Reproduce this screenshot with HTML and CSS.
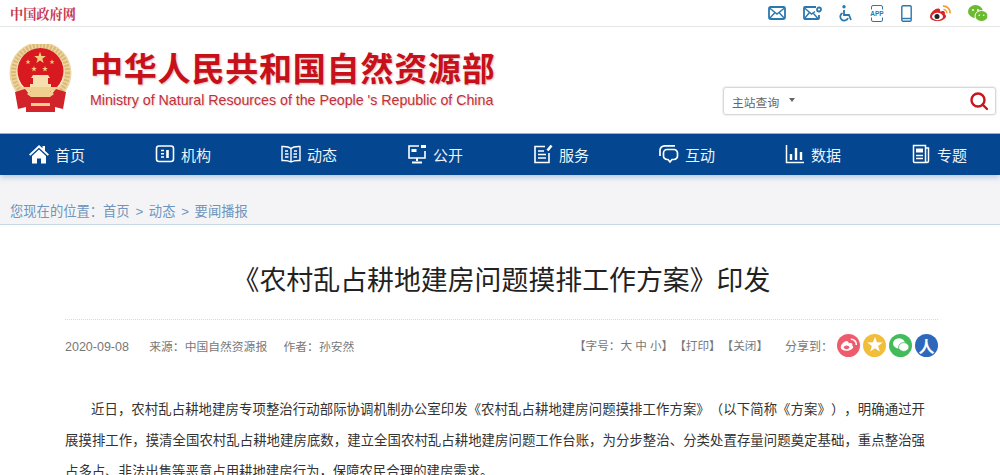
FILE: index.html
```html
<!DOCTYPE html>
<html lang="zh-CN">
<head>
  <meta charset="UTF-8" />
  <meta name="viewport" content="width=device-width, initial-scale=1" />
  <title>《农村乱占耕地建房问题摸排工作方案》印发</title>
  <link rel="stylesheet" href="styles.css">
</head>

<body>
  <svg class="defs" width="0" height="0">
    <defs>
      <polygon id="star" points="0,-10 2.35,-3.24 9.51,-3.09 3.8,1.24 5.88,8.09 0,4 -5.88,8.09 -3.8,1.24 -9.51,-3.09 -2.35,-3.24" />
    </defs>
  </svg>

  <!-- Barre du haut -->
  <div class="topbar">
    <a class="gov-link">中国政府网</a>
    <div class="top-icons">
      <svg width="18" height="14" viewBox="0 0 18 14" fill="none" stroke="#2b78ae" stroke-width="1.8">
        <rect x="1" y="1" width="16" height="12" rx="1.5" />
        <path d="M1.5 2 9 8l7.5-6M1.5 12.5 7 6.5M16.500 12.500 11 6.500" stroke-width="1.400" />
      </svg>
      <svg width="19" height="14" viewBox="0 0 19 14" fill="none" stroke="#2b78ae" stroke-width="1.8">
        <path d="M13 1H2a1 1 0 0 0-1 1v10a1 1 0 0 0 1 1h13a1 1 0 0 0 1-1V9" />
        <path d="M1.500 2 8.500 8 12 5.500M1.500 12.500 6.500 6.500M15 12.500 10.500 7.500" stroke-width="1.400" />
        <circle cx="16" cy="3.500" r="2" />
      </svg>
      <svg width="14" height="17" viewBox="0 0 14 17" fill="none" stroke="#2b78ae" stroke-width="1.800">
        <circle cx="5" cy="1.800" r="1.700" fill="#2b78ae" stroke="none" />
        <path d="M5 5v5h5l2 5" />
        <path d="M3.500 8a4 4 0 1 0 5.500 5" />
      </svg>
      <svg width="14" height="17" viewBox="0 0 14 17">
        <rect x="1.500" y="0.500" width="11" height="16" rx="1.500" fill="none" stroke="#2b78ae" />
        <rect x="0" y="4.500" width="14" height="8" fill="#fff" />
        <text x="7" y="11" class="app-text">APP</text>
      </svg>
      <svg width="11" height="17" viewBox="0 0 11 17" fill="none" stroke="#2b78ae" stroke-width="1.400">
        <rect x="0.800" y="0.800" width="9.400" height="15.400" rx="1.200" />
        <path d="M1 13.500h9" />
      </svg>
      <svg width="22" height="17" viewBox="0 0 22 17">
        <path d="M1 11.500C1 8 6 3 9.500 3.500c2 .3 1.800 2.300 1.500 3 2.500-1 5-.7 5 1.500 0 .7-.3 1.200-.3 1.200 1.200.6 1.300 1.500 1.300 2 0 2.500-4 4.800-8.500 4.800C4 16 1 14.500 1 11.500z" fill="#d7252c" />
        <ellipse cx="8.500" cy="11.500" rx="5.500" ry="3.700" fill="#fff" />
        <circle cx="8" cy="11.500" r="2.500" fill="#222" />
        <path d="M14 1.200a6.500 6.500 0 0 1 7 7.300" fill="none" stroke="#f0a030" stroke-width="1.700" />
        <path d="M14.500 4.500a3.300 3.300 0 0 1 3.300 3.700" fill="none" stroke="#f0a030" stroke-width="1.400" />
      </svg>
      <svg width="20" height="17" viewBox="0 0 20 17">
        <ellipse cx="7.500" cy="6.500" rx="7.500" ry="6.500" fill="#6cba2f" />
        <ellipse cx="13.500" cy="11" rx="6.500" ry="5.500" fill="#6cba2f" stroke="#fff" stroke-width="1" />
        <circle cx="5" cy="5" r="1" fill="#fff" />
        <circle cx="10" cy="5" r="1" fill="#fff" />
        <circle cx="11.300" cy="10.300" r=".8" fill="#fff" />
        <circle cx="15.700" cy="10.300" r=".8" fill="#fff" />
      </svg>
    </div>
  </div>

  <!-- En-tete -->
  <header class="header">
    <div class="brand">
      <svg class="emblem" width="63" height="68" viewBox="0 0 63 68">
        <circle cx="31.500" cy="29" r="31" fill="#ecd6a4" />
        <circle cx="31.500" cy="28.500" r="27" fill="none" stroke="#dcb873" stroke-width="5" stroke-dasharray="2 1.500" />
        <circle cx="31.500" cy="28" r="24" fill="#f5e6c4" />
        <circle cx="31.500" cy="27" r="23" fill="#d81920" />
        <use href="#star" transform="translate(31 14) scale(.62)" fill="#f3cf7c" />
        <use href="#star" transform="translate(19 18) scale(.27)" fill="#f3cf7c" />
        <use href="#star" transform="translate(25 25) scale(.3)" fill="#f3cf7c" />
        <use href="#star" transform="translate(36 25) scale(.3)" fill="#f3cf7c" />
        <use href="#star" transform="translate(43 18) scale(.27)" fill="#f3cf7c" />
        <path d="M24 31h15l2 3h-2v6h3v3H21v-3h3v-6h-2z" fill="#f5dfae" />
        <path d="M11 43h41l-3 4H14z" fill="#f0d08f" />
        <path d="M6 48l10-3 6 7h19l6-7 10 3-3 17-8-2v5H17v-5l-8 2z" fill="#d2232a" />
        <path d="M18 50c4-4 8-4 13.500-6 5.500 2 9.500 2 13.500 6l-4 3H22z" fill="#f0d08f" />
        <rect x="22" y="59" width="19" height="3" fill="#f0d08f" />
      </svg>
      <div class="brand-text">
        <h1>中华人民共和国自然资源部</h1>
        <p>Ministry of Natural Resources of the People 's Republic of China</p>
      </div>
    </div>
    <div class="search">
      <span class="search-label">主站查询</span>
      <span class="caret"></span>
      <svg class="search-icon" width="20" height="20" viewBox="0 0 20 20" fill="none" stroke="#c8161d" stroke-width="2.400">
        <circle cx="9" cy="9" r="6.500" />
        <path d="M13.500 13.500 18 18" stroke-linecap="round" />
      </svg>
    </div>
  </header>

  <!-- Menu -->
  <nav class="nav">
    <a class="nav-item">
      <svg width="20" height="20" viewBox="0 0 20 20" fill="#fff">
        <path d="M10 1 0 10.500l1.300 1.300L10 3.700l8.700 8.100 1.300-1.300-4-3.800V2h-2.500v2.300z" />
        <path d="M10 5.500 3 12v7.500h5v-5h4v5h5V12z" />
      </svg>
      首页
    </a>
    <a class="nav-item">
      <svg width="20" height="20" viewBox="0 0 20 20" fill="none" stroke="#fff" stroke-width="1.600">
        <rect x="1.500" y="2" width="17" height="15.500" rx="2.500" />
        <path d="M6 6.500h3M6 9.800h3M6 13h3" />
        <path d="M12.500 6v8" stroke-width="2.600" />
      </svg>
      机构
    </a>
    <a class="nav-item">
      <svg width="20" height="20" viewBox="0 0 20 20" fill="none" stroke="#fff" stroke-width="1.400">
        <path d="M10 4.500C8 2.800 5 2.300 1 2.500v14c4-.2 7 .3 9 1.500 2-1.200 5-1.700 9-1.500v-14c-4-.2-7 .3-9 2zM10 4.500V18" />
        <path d="M4 7h3M4 10h3.500M4 13h3.500M13 7h3M12.500 10h3.500M12.500 13h3.500" />
      </svg>
      动态
    </a>
    <a class="nav-item">
      <svg width="20" height="20" viewBox="0 0 20 20" fill="none" stroke="#fff" stroke-width="1.600">
        <path d="M12 2H2v12h16V7" />
        <path d="M10 14v3M5 18.500h10" stroke-width="2" />
        <rect x="4.500" y="5" width="5" height="3" fill="#fff" stroke="none" />
        <rect x="14" y="1" width="5" height="3" fill="#fff" stroke="none" />
      </svg>
      公开
    </a>
    <a class="nav-item">
      <svg width="20" height="20" viewBox="0 0 20 20" fill="none" stroke="#fff" stroke-width="1.600">
        <path d="M12 2.500H2v16h14V9" />
        <path d="M5 7h6M5 10.500h8M5 14h8" />
        <path d="M14.500 6.500 18.500 1.500" stroke-width="2.600" />
      </svg>
      服务
    </a>
    <a class="nav-item">
      <svg width="20" height="20" viewBox="0 0 20 20" fill="none" stroke="#fff" stroke-width="1.700">
        <path d="M16 1.800H5.500A4.500 4.500 0 0 0 1 6.300V12" />
        <path d="M8 5.500h7a3.500 3.500 0 0 1 3.500 3.500v3a3.500 3.500 0 0 1-3.500 3.500h-2L11 18l-2-2.500H8A3.500 3.500 0 0 1 4.500 12V9A3.500 3.500 0 0 1 8 5.500z" />
      </svg>
      互动
    </a>
    <a class="nav-item">
      <svg width="20" height="20" viewBox="0 0 20 20" fill="none" stroke="#fff">
        <path d="M1.500 1v17.500H19" stroke-width="1.500" />
        <path d="M6 10v6M11 4v12M16 8v8" stroke-width="2.400" />
      </svg>
      数据
    </a>
    <a class="nav-item">
      <svg width="20" height="20" viewBox="0 0 20 20" fill="none" stroke="#fff" stroke-width="1.500">
        <path d="M2.500 1.500h12v17h-11a1 1 0 0 1-1-1zM14.500 4h3v13a1.500 1.500 0 0 1-3 0" />
        <rect x="5" y="4.500" width="7" height="4" fill="#fff" stroke="none" />
        <path d="M5 11.500h7M5 14.500h7" />
      </svg>
      专题
    </a>
  </nav>

  <div class="crumbs">您现在的位置：首页 <i>&gt;</i> 动态 <i>&gt;</i> 要闻播报</div>

  <main class="article">
    <h2 class="article-title">《农村乱占耕地建房问题摸排工作方案》印发</h2>

    <div class="meta">
      <div class="meta-left">
        <span class="date">2020-09-08</span>
        <span class="source">来源：中国自然资源报</span>
        <span>作者：孙安然</span>
      </div>
      <div class="meta-right">
        <span class="tool">【字号：大 中 小】</span>
        <span class="tool">【打印】</span>
        <span class="tool">【关闭】</span>
        <span class="share-label">分享到：</span>
        <a class="share share-weibo">
          <svg width="17" height="14" viewBox="0 0 22 17">
            <path d="M1 11.500C1 8 6 3 9.500 3.500c2 .3 1.800 2.300 1.500 3 2.500-1 5-.7 5 1.500 0 .7-.3 1.200-.3 1.200 1.200.6 1.300 1.500 1.300 2 0 2.500-4 4.800-8.500 4.800C4 16 1 14.500 1 11.500z" fill="#fff" />
            <ellipse cx="8.500" cy="11.500" rx="3.500" ry="2.500" fill="#ee5b6c" />
            <path d="M14 1.200a6.500 6.500 0 0 1 7 7.300" fill="none" stroke="#fff" stroke-width="2" />
          </svg>
        </a>
        <a class="share share-star">
          <svg width="18" height="18" viewBox="-11 -11 22 22">
            <use href="#star" fill="#fff" />
          </svg>
        </a>
        <a class="share share-wechat">
          <svg width="16" height="14" viewBox="0 0 20 17" fill="#fff">
            <ellipse cx="7.500" cy="6.500" rx="7.500" ry="6.500" />
            <ellipse cx="13.500" cy="11" rx="6.500" ry="5.500" stroke="#42bb5a" />
          </svg>
        </a>
        <a class="share share-renren">人</a>
      </div>
    </div>

    <p class="body-text">近日，农村乱占耕地建房专项整治行动部际协调机制办公室印发《农村乱占耕地建房问题摸排工作方案》（以下简称《方案》），明确通过开展摸排工作，摸清全国农村乱占耕地建房底数，建立全国农村乱占耕地建房问题工作台账，为分步整治、分类处置存量问题奠定基础，重点整治强占多占、非法出售等恶意占用耕地建房行为，保障农民合理的建房需求。</p>
  </main>
</body>
</html>
```

FILE: styles.css
```css
html,
body {
  margin: 0;
  height: 475px;
  overflow: hidden;
}

body {
  background-color: #fff;
  color: #333;
  font-family: "Liberation Sans", "Noto Sans CJK SC", sans-serif;
  text-spacing-trim: space-all;
}

a {
  cursor: pointer;
}

.defs {
  position: absolute;
}

.topbar {
  display: flex;
  justify-content: space-between;
  align-items: center;
  height: 26px;
  padding: 0 12px 0 10px;
  border-bottom: 1px solid #e6e6e6;
}

.gov-link {
  color: #c9394f;
  font-family: "Noto Serif CJK SC", "Noto Sans CJK SC", serif;
  font-size: 13.200px;
  font-weight: bold;
}

.top-icons {
  display: flex;
  align-items: center;
  gap: 17px;
}

.app-text {
  fill: #2b78ae;
  font-family: "Liberation Sans", sans-serif;
  font-size: 6.500px;
  font-weight: bold;
  text-anchor: middle;
}

.header {
  display: flex;
  justify-content: space-between;
  height: 106px;
  box-sizing: border-box;
  padding: 17px 4px 0 9px;
}

.brand {
  display: flex;
  gap: 18px;
}

.brand-text h1 {
  margin: 3px 0 0;
  color: #c7101a;
  font-family: "Noto Sans CJK SC", sans-serif;
  font-size: 33px;
  font-weight: bold;
  letter-spacing: 0.800px;
  line-height: 40px;
  white-space: nowrap;
  text-shadow: 1px 1px 2px rgba(150, 60, 60, 0.35);
}

.brand-text p {
  margin: 4px 0 0;
  color: #c2303a;
  font-size: 14.200px;
  line-height: 18px;
  white-space: nowrap;
  text-shadow: 1px 1px 1px rgba(150, 60, 60, 0.25);
}

.search {
  display: flex;
  align-items: center;
  box-sizing: border-box;
  width: 273px;
  height: 28px;
  margin-top: 43px;
  padding: 0 6px 0 8px;
  border: 1px solid #d8d8d8;
  border-radius: 3px;
  box-shadow: 0 0 2px #ccc;
}

.search-label {
  color: #666;
  font-size: 11.800px;
}

.caret {
  margin: 0 0 2px 10px;
  border-top: 4px solid #666;
  border-left: 3px solid transparent;
  border-right: 3px solid transparent;
}

.search-icon {
  margin-left: auto;
}

.nav {
  display: flex;
  box-sizing: border-box;
  height: 42px;
  padding: 0 0 1px 29px;
  background: #04468f;
  border-top: 1px solid #8fb5d3;
  box-shadow: 0 3px 5px rgba(90, 140, 190, 0.35);
  position: relative;
  overflow: hidden;
}

.nav-item {
  display: flex;
  flex: 0 0 126px;
  align-items: center;
  gap: 6px;
  color: #eef3f8;
  font-size: 15px;
}

.crumbs {
  box-sizing: border-box;
  height: 50px;
  padding: 29px 0 0 10px;
  background: #f4f4f6;
  border-bottom: 1px solid #c5d9e6;
  color: #6f95bd;
  font-size: 13.300px;
  line-height: 16px;
}

.crumbs i {
  font-style: normal;
  margin: 0 2px;
}

.article {
  padding: 0 62px 0 65px;
}

.article-title {
  margin: 0;
  padding: 36px 0 22px;
  border-bottom: 1px dotted #d8d8d8;
  color: #222;
  font-family: "Noto Sans CJK SC", sans-serif;
  font-size: 26.900px;
  font-weight: normal;
  line-height: 36px;
  text-align: center;
}

.meta {
  display: flex;
  justify-content: space-between;
  align-items: center;
  height: 50px;
  color: #777;
  font-size: 11.800px;
}

.date {
  font-size: 12.500px;
  margin-right: 17px;
}

.source {
  margin-right: 13px;
}

.meta-right {
  display: flex;
  align-items: center;
}

.tool {
  font-size: 11.600px;
  margin-right: 1px;
}

.share-label {
  margin: 0 1px 0 16px;
  font-size: 12px;
}

.share {
  display: flex;
  justify-content: center;
  align-items: center;
  width: 23px;
  height: 23px;
  margin-left: 3px;
  border-radius: 50%;
}

.share-weibo {
  background: #ee5b6c;
}

.share-star {
  background: #f3bd3c;
}

.share-wechat {
  background: #42bb5a;
}

.share-renren {
  background: #2d68bb;
  color: #fff;
  font-family: "Noto Sans CJK SC", sans-serif;
  font-size: 16px;
  font-weight: bold;
}

.body-text {
  margin: 23px 13px 0 0;
  color: #333;
  font-family: "Noto Sans CJK SC", sans-serif;
  font-size: 13.400px;
  line-height: 31px;
  text-align: justify;
  text-indent: 26px;
}
```
